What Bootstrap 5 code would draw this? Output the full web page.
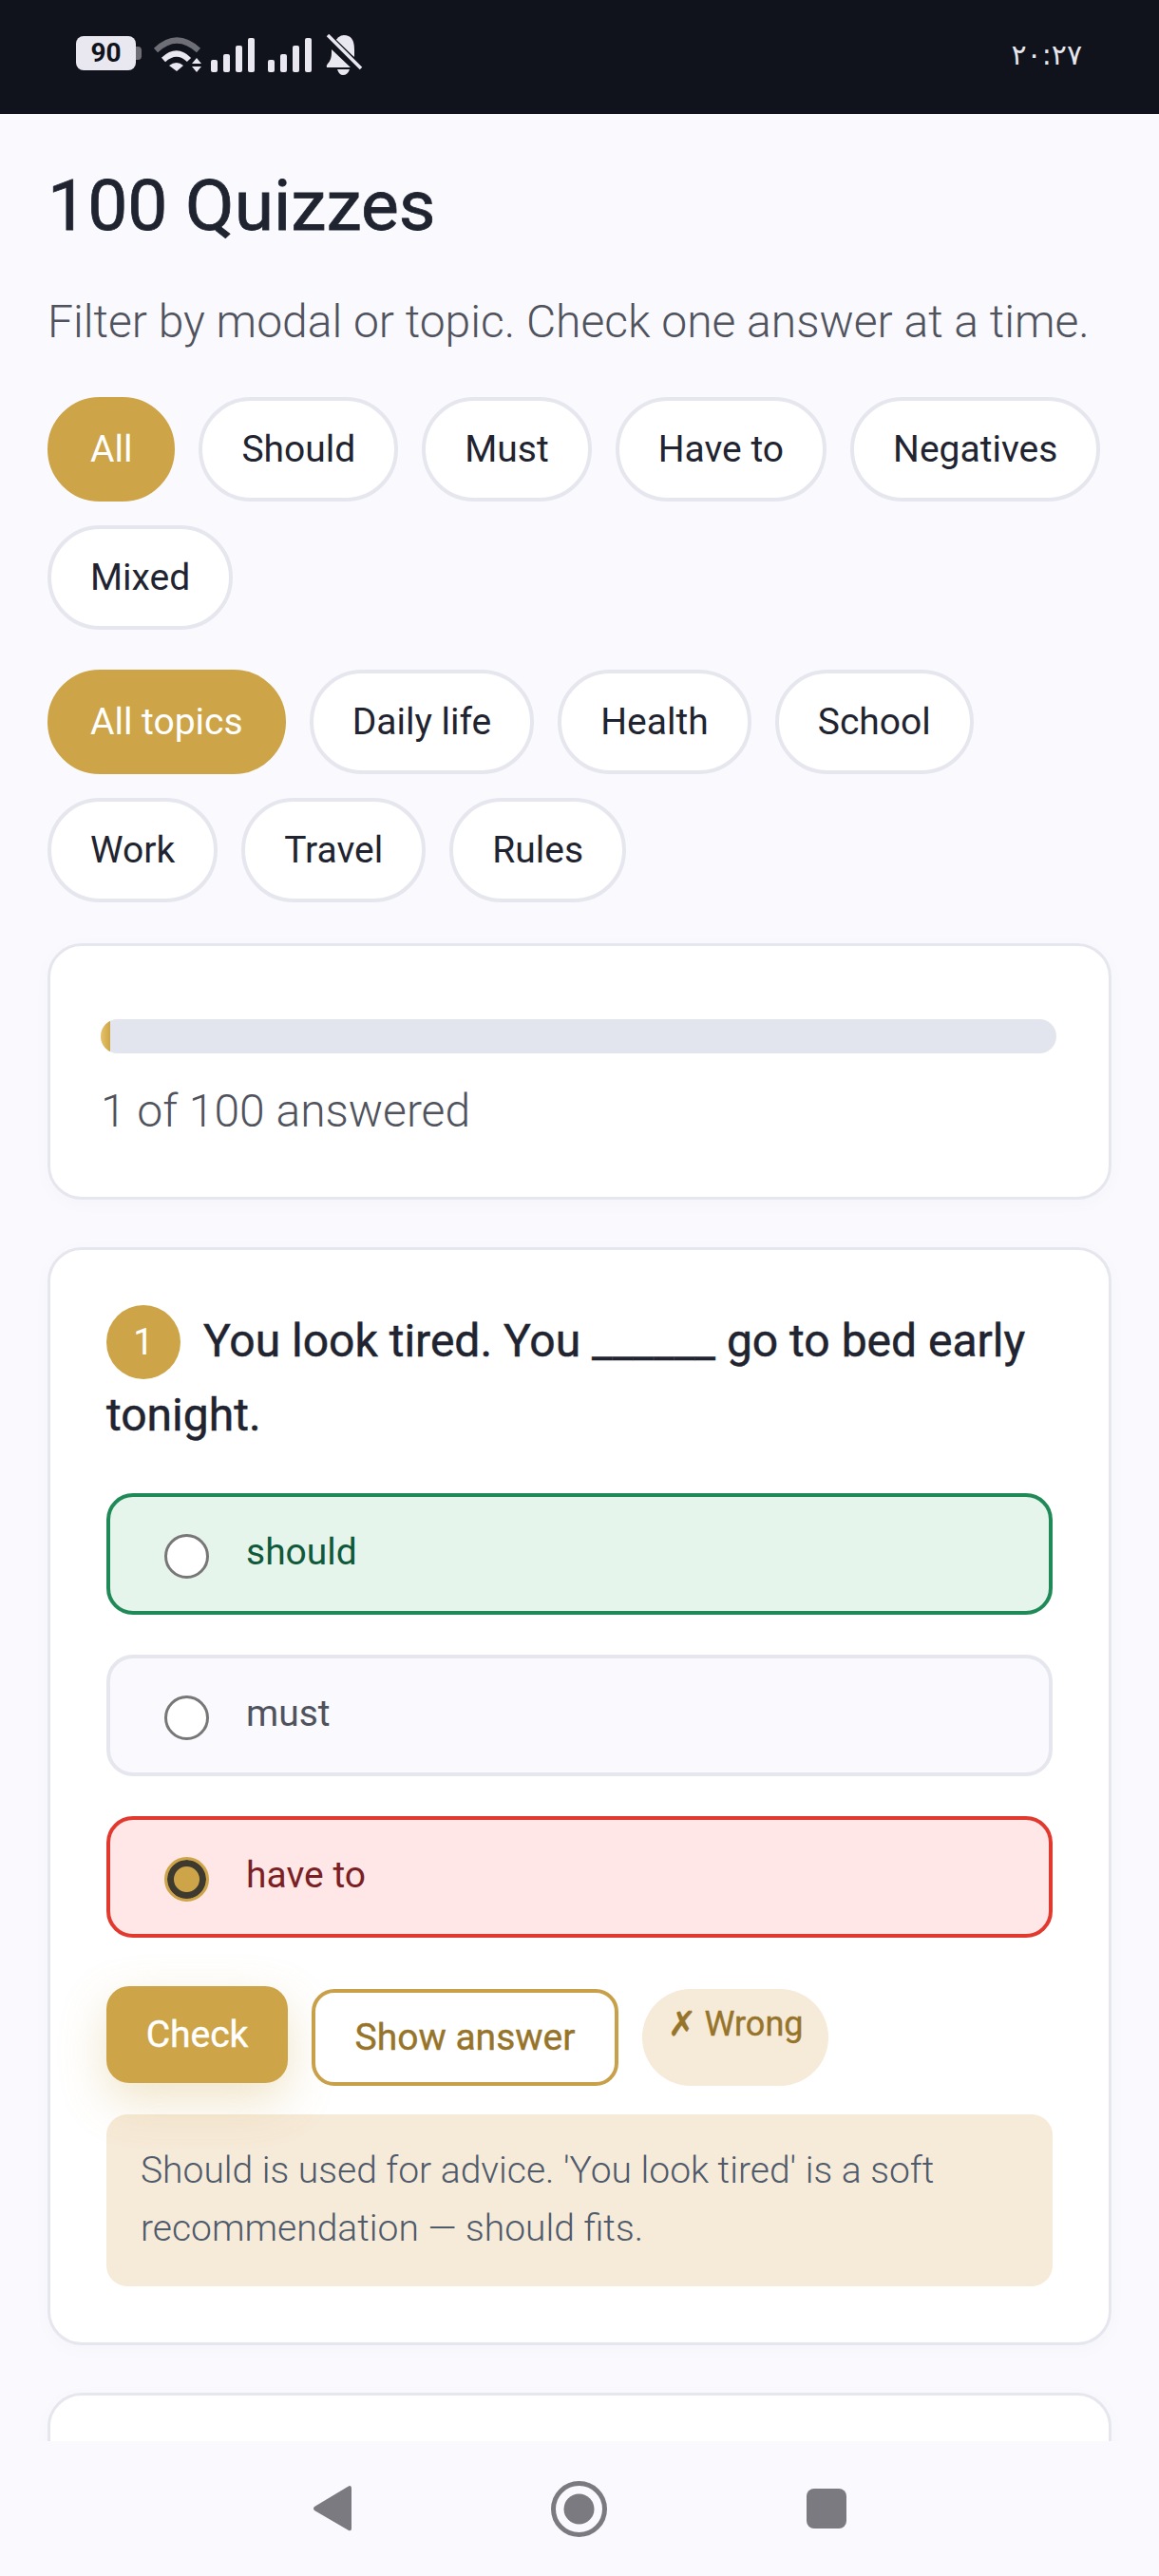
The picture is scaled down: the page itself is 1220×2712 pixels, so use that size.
<!DOCTYPE html>
<html lang="en">
<head>
  <meta charset="UTF-8" />
  <meta name="viewport" content="width=device-width, initial-scale=1.0">
  <title>100 Quizzes</title>
  <link href="https://cdn.jsdelivr.net/npm/bootstrap@5.3.2/dist/css/bootstrap.min.css" rel="stylesheet">
  <style>
    html, body { height: 2712px; overflow: hidden; }
    body {
      font-family: Roboto, "Liberation Sans", sans-serif;
      background-color: #f9f9fe;
      color: #1f2430;
    }
    .status-bar { height: 120px; background-color: #10131c; padding: 0 81px 0 80px; color: #e6e6ee; }
    .batt { width: 63px; height: 36px; background-color: #e9e8f0; color: #10131c; border-radius: 8px; font: 700 28px/36px Roboto, sans-serif; text-align: center; margin-top: -8px; }
    .batt-nub { width: 6px; height: 14px; background-color: #6d6e76; border-radius: 0 4px 4px 0; margin: -8px 12px 0 0; }
    .clock { font: 400 30px/1 "DejaVu Sans", sans-serif; direction: ltr; margin-top: -4px; letter-spacing: 1px; }
    .page-wrap { height: 2450px; overflow: hidden; padding: 50px 50px 0; }
    .page-title { font-size: 75px; line-height: 92px; font-weight: 400; -webkit-text-stroke: .8px #1f2430; color: #1f2430; margin: 0 0 44px; }
    .page-sub { font-size: 48px; line-height: 66px; font-weight: 300; color: #50535d; margin: 0 0 46px; white-space: nowrap; }
    .pill-row { gap: 25px 25px; margin-bottom: 42px; }
    .pill-btn {
      height: 110px; padding: 0 41px; font-size: 39px; line-height: 102px; font-weight: 400;
      color: #1f2430; background-color: #fff; border: 4px solid #e6e7ee; border-radius: 55px;
    }
    .pill-btn.is-on { background-color: #cda548; border-color: #cda548; color: #fff; }
    .quiz-card { border: 3px solid #e6e7ee; border-radius: 36px; background-color: #fff; box-shadow: 0 4px 20px rgba(30, 30, 60, .025); }
    .progress-box { margin-top: 43px; padding: 77px 55px 54px 53px; }
    .progress.track { height: 36px; border-radius: 18px; background-color: #e2e5ee; }
    .progress-bar.fill { background: linear-gradient(90deg, #e6c268, #cda548); }
    .progress-txt { font-size: 48px; line-height: 72px; font-weight: 300; color: #50535d; margin-top: 25px; }
    .question-box { margin-top: 50px; padding: 57px 59px 59px; }
    .q-text { font-size: 48px; line-height: 78px; font-weight: 400; -webkit-text-stroke: .5px #1f2430; margin: 0 0 43px; color: #1f2430; }
    .q-num {
      display: inline-flex; align-items: center; justify-content: center; width: 78px; height: 78px;
      margin: -10px 24px -10px 0; vertical-align: 2px; border-radius: 50%;
      background-color: #cda548; color: #fff; -webkit-text-stroke: 0; font-size: 38px; font-weight: 400;
    }
    .opt-list { gap: 42px; }
    .opt-row { height: 128px; gap: 39px; padding-left: 57px; border: 4px solid #e6e7ee; border-radius: 28px; background-color: #f9f9fe; color: #50535d; font-size: 39px; margin: 0; }
    .opt-row.is-right { border-color: #1f8a57; background-color: #e6f5ec; color: #10593a; }
    .opt-row.is-wrong { border-color: #e2392f; background-color: #ffe7e7; color: #7a1f24; }
    .opt-row span { margin-top: -4px; }
    .opt-row .form-check-input { width: 47px; height: 47px; margin: 4px 0 0; flex: none; background-color: #fff; border: 3px solid #777; }
    .opt-row .form-check-input:checked { background-color: #cda548; background-image: none; border: 3px solid #cda548; box-shadow: inset 0 0 0 7px #3f3a30; }
    .act-row { gap: 25px; margin-top: 54px; }
    .act-btn { height: 102px; padding: 0; font-size: 39px; font-weight: 400; -webkit-text-stroke: .4px currentColor; border-radius: 24px; }
    .btn-check-q { width: 191px; margin-top: -3px; background-color: #cda548; border: 0; color: #fff; box-shadow: 0 18px 50px rgba(205, 165, 72, .3); }
    .btn-show { width: 323px; background-color: #fff; border: 4px solid #c9a04a; color: #96742a; }
    .result-tag { width: 196px; height: 102px; border-radius: 51px; background-color: #f6ead8; color: #96742a; font-size: 36px; font-weight: 400; -webkit-text-stroke: .4px currentColor; line-height: 1; text-align: center; padding-top: 19px; }
    .explain-box { margin-top: 30px; height: 181px; padding: 29px 36px; border-radius: 22px; background-color: #f6ead8; color: #4f5a6b; font-size: 39px; line-height: 61px; font-weight: 300; }
    .next-card { margin-top: 50px; height: 120px; }
    .nav-bottom { height: 142px; gap: 210px; background-color: #f9f9fe; }
  </style>
</head>
<body>
  <div class="status-bar d-flex align-items-center justify-content-between">
    <div class="d-flex align-items-center">
      <div class="batt">90</div>
      <div class="batt-nub"></div>
      <!-- wifi, two signal groups, muted bell -->
      <svg width="232" height="44" viewBox="161 36 232 44" style="margin-top:-4px" aria-hidden="true">
        <path d="M164 53 Q186 32 209 53" fill="none" stroke="#6d6e76" stroke-width="6"/>
        <path d="M172 63 Q186 50 199 63" fill="none" stroke="#e9e8f0" stroke-width="6"/>
        <path d="M178 69 Q186 63 193 69 L186 75 Z" fill="#e9e8f0"/>
        <path d="M207 61 L212 67 H202 Z M207 76 L212 70 H202 Z" fill="#e9e8f0"/>
        <g fill="#e9e8f0">
          <rect x="222" y="63" width="7" height="13" rx="2"/><rect x="235" y="57" width="7" height="19" rx="2"/>
          <rect x="248" y="48" width="7" height="28" rx="2"/><rect x="261" y="40" width="7" height="36" rx="2"/>
          <rect x="282" y="63" width="7" height="13" rx="2"/><rect x="295" y="57" width="7" height="19" rx="2"/>
          <rect x="308" y="48" width="7" height="28" rx="2"/><rect x="321" y="40" width="7" height="36" rx="2"/>
          <path d="M351 46 Q356 37 362 37 Q373 37 373 52 V60 Z"/>
          <path d="M349 52 L369 71 H344 Q343 69 345 67 Q349 63 349 56 Z"/>
          <path d="M355 73 H368 Q366 79 361 79 Q357 79 355 73 Z"/>
        </g>
        <path d="M344 37 L381 73" stroke="#10131c" stroke-width="7"/>
        <path d="M345 37 L380 72" stroke="#e9e8f0" stroke-width="3.5"/>
      </svg>
    </div>
    <div class="clock">٢٠:٢٧</div>
  </div>

  <div class="page-wrap">
    <h1 class="page-title">100 Quizzes</h1>
    <p class="page-sub">Filter by modal or topic. Check one answer at a time.</p>

    <div class="d-flex flex-wrap pill-row">
      <button class="btn pill-btn is-on">All</button>
      <button class="btn pill-btn">Should</button>
      <button class="btn pill-btn">Must</button>
      <button class="btn pill-btn">Have to</button>
      <button class="btn pill-btn">Negatives</button>
      <button class="btn pill-btn">Mixed</button>
    </div>
    <div class="d-flex flex-wrap pill-row mb-0">
      <button class="btn pill-btn is-on">All topics</button>
      <button class="btn pill-btn">Daily life</button>
      <button class="btn pill-btn">Health</button>
      <button class="btn pill-btn">School</button>
      <button class="btn pill-btn">Work</button>
      <button class="btn pill-btn">Travel</button>
      <button class="btn pill-btn">Rules</button>
    </div>

    <div class="quiz-card progress-box">
      <div class="progress track"><div class="progress-bar fill" style="width: 1%"></div></div>
      <div class="progress-txt">1 of 100 answered</div>
    </div>

    <div class="quiz-card question-box">
      <p class="q-text"><span class="q-num">1</span>You look tired. You ______ go to bed early tonight.</p>
      <div class="d-flex flex-column opt-list">
        <label class="d-flex align-items-center opt-row is-right"><input class="form-check-input" type="radio" name="q1"><span>should</span></label>
        <label class="d-flex align-items-center opt-row"><input class="form-check-input" type="radio" name="q1"><span>must</span></label>
        <label class="d-flex align-items-center opt-row is-wrong"><input class="form-check-input" type="radio" name="q1" checked><span>have to</span></label>
      </div>
      <div class="d-flex align-items-start act-row">
        <button class="btn act-btn btn-check-q">Check</button>
        <button class="btn act-btn btn-show">Show answer</button>
        <div class="result-tag">✗ Wrong</div>
      </div>
      <div class="explain-box">Should is used for advice. 'You look tired' is a soft recommendation — should fits.</div>
    </div>

    <div class="quiz-card next-card"></div>
  </div>

  <div class="d-flex align-items-center justify-content-center nav-bottom">
    <svg width="40" height="48" viewBox="0 0 40 48" aria-hidden="true"><path d="M38 0 Q40 0 40 3 V45 Q40 48 37 47 L1 26 Q-1 24 1 22 L36 1 Z" fill="#7b7a80"/></svg>
    <svg width="59" height="59" viewBox="0 0 59 59" aria-hidden="true"><circle cx="29.5" cy="29.5" r="27" fill="none" stroke="#7b7a80" stroke-width="5"/><circle cx="29.5" cy="29.5" r="16" fill="#7b7a80"/></svg>
    <svg width="42" height="42" viewBox="0 0 42 42" aria-hidden="true"><rect width="42" height="42" rx="8" fill="#7b7a80"/></svg>
  </div>
  <script src="https://cdn.jsdelivr.net/npm/bootstrap@5.3.2/dist/js/bootstrap.bundle.min.js"></script>
</body>
</html>
